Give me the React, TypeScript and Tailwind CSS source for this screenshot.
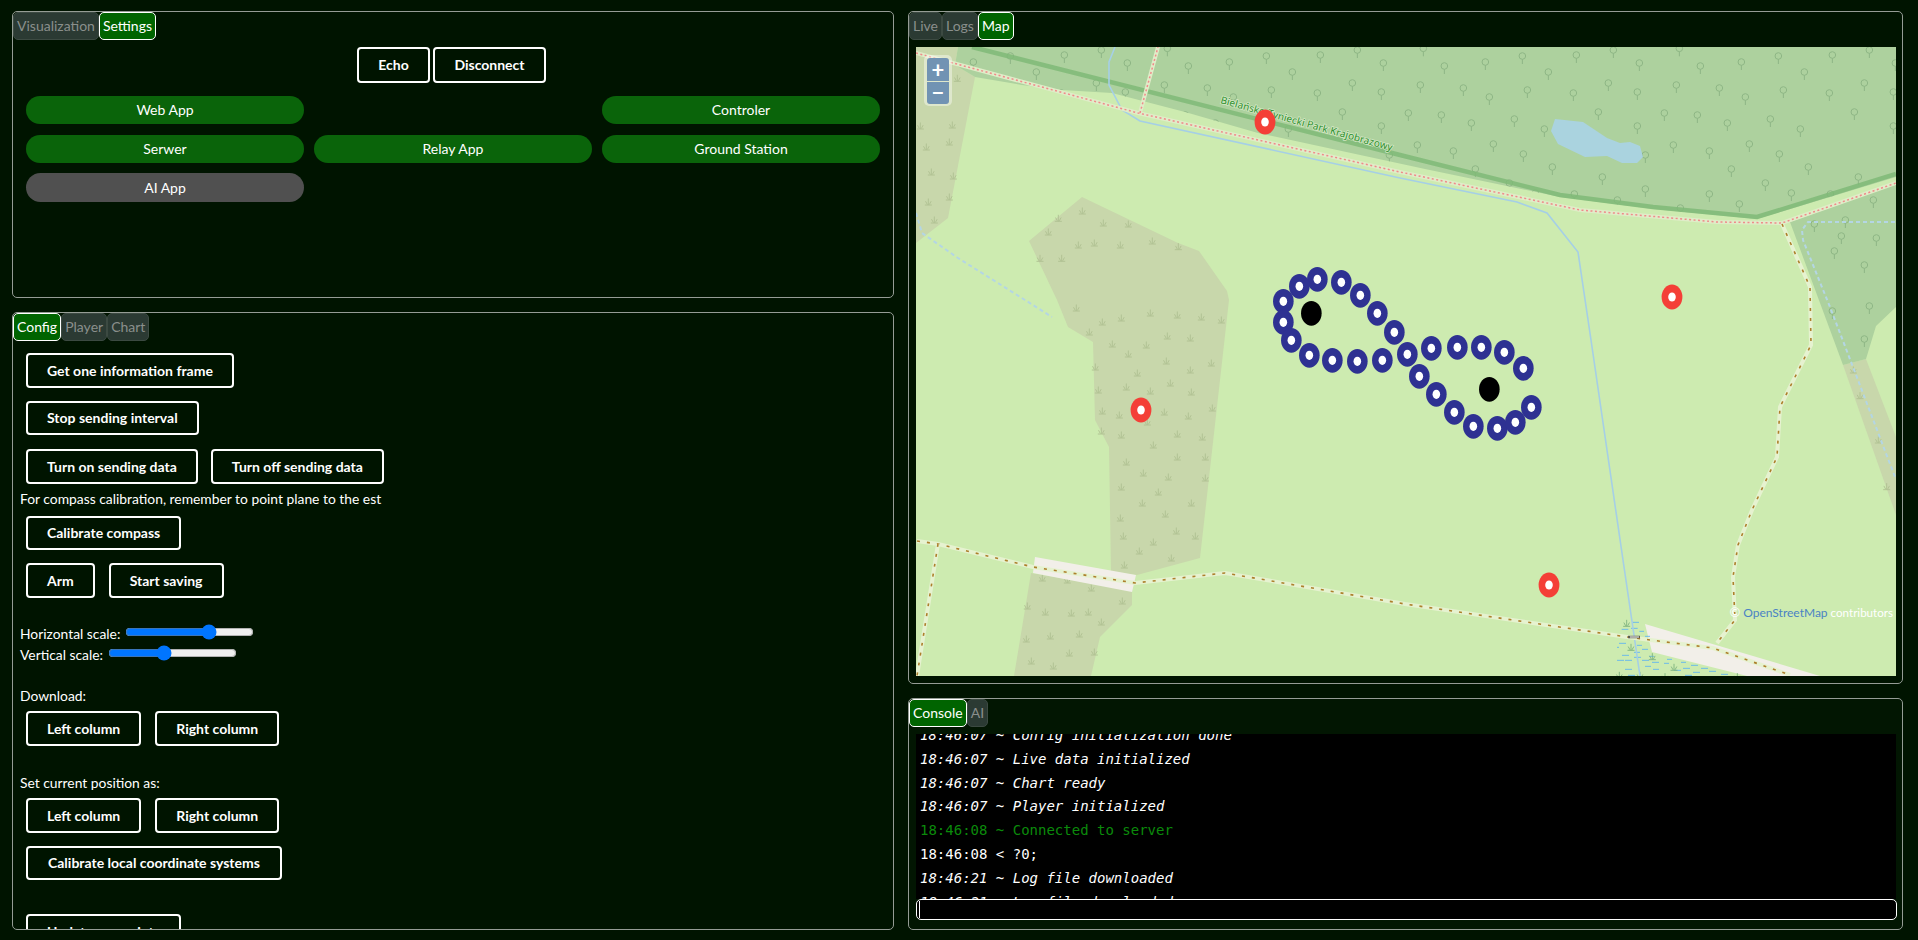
import React from "react";

// coordinates below are page pixels, the map svg's viewBox starts at the map's corner
const forestMain = "958,47 955,65 975,77 1022,85 1062,90 1112,93 1185,112 1258,133 1425,169 1560,197 1653,209 1757,219 1896,177 1896,47";
const forestRight = "1790,222 1896,184 1896,307 1876,326 1866,359 1843,365";
const lake = "1555,119 1583,122 1607,138 1620,143 1630,142 1640,146 1643,157 1637,163 1622,163 1607,156 1585,157 1558,144 1551,131";

const scrubAreas = [
    "916,47 958,47 955,65 975,77 948,218 916,243",
    "1082,197 1178,243 1199,251 1227,291 1229,300 1200,558 1137,575 1111,572 1109,447 1095,420 1093,342 1068,327 1057,300 1029,241",
    "1031,573 1132,590 1132,605 1100,637 1091,676 1014,676",
    "1843,365 1866,359 1896,437 1896,515",
];

const treeTile = [
    [70, 145], [133, 198], [256, 186], [367, 168], [529, 165], [640, 150], [718, 189], [445, 216], [61, 255], [190, 264],
    [382, 270], [268, 291], [520, 279], [625, 249], [712, 276], [25, 339], [124, 345], [214, 369], [343, 357], [433, 387],
    [595, 336], [712, 378], [52, 435], [160, 453], [280, 432], [370, 462], [736, 465], [226, 507], [457, 501], [607, 531],
    [736, 567], [328, 549], [523, 582], [652, 600], [73, 624], [160, 582], [250, 612], [406, 579], [349, 672], [475, 672],
    [568, 660], [661, 714], [535, 753], [625, 795], [556, 708],
];

const grassMid = [
    [514, 24], [592, 66], [649, 54], [736, 39], [817, 45], [889, 51], [949, 60], [553, 96], [622, 132], [724, 135],
    [787, 108], [856, 114], [670, 162], [784, 183], [856, 210], [919, 189], [571, 201], [697, 219], [664, 261], [736, 273],
    [796, 249], [859, 276], [580, 270], [592, 333], [643, 345], [778, 336], [850, 348], [922, 324], [727, 366], [589, 393],
    [649, 405], [817, 402], [892, 411], [745, 435], [664, 486], [817, 471], [901, 471], [715, 519], [790, 531], [901, 534],
    [649, 561], [760, 576], [712, 609], [859, 609], [646, 654], [781, 642], [655, 708], [745, 726], [814, 693], [871, 708],
    [703, 753], [799, 774], [658, 795], [412, 834], [487, 840], [559, 864], [652, 903], [367, 918], [421, 936], [499, 939],
    [550, 936], [589, 966], [364, 1017], [436, 1008], [523, 1002], [493, 1059], [568, 1056], [379, 1083], [445, 1098],
];
const grassTop = [
    [92, 230], [157, 235], [46, 378], [142, 375], [64, 441], [133, 426], [79, 516], [145, 528], [70, 606], [133, 591], [88, 660],
    [532, 633], [460, 655], [595, 669], [670, 672], [430, 696], [520, 735], [568, 729], [646, 735], [742, 723], [820, 740], [405, 775], [470, 775],
];
const grassRight = [[340, 480], [360, 557], [415, 690], [440, 830]];

const trackDots = [
    [232, 88], [178, 109], [130, 154], [130, 217], [154, 271], [208, 316], [277, 331], [352, 334], [427, 331], [502, 313],
    [538, 379], [589, 433], [643, 487], [700, 529], [772, 535], [826, 517], [874, 472], [304, 97], [361, 136], [412, 190],
    [463, 247], [574, 295], [652, 292], [724, 292], [793, 307], [850, 355],
];
const homeDots = [[214, 190], [748, 418]];
const redDots = [[1265, 122], [1672, 297], [1141, 410], [1549, 585]];

const wetDashes = [
    [697, 717, 187], [665, 685, 208], [693, 713, 205], [718, 732, 214], [660, 675, 229], [735, 750, 229], [657, 678, 250], [711, 726, 256],
    [726, 744, 268], [651, 657, 262], [666, 687, 286], [702, 723, 292], [747, 762, 289], [651, 672, 301], [675, 696, 301], [726, 747, 301],
    [756, 777, 307], [792, 807, 310], [843, 858, 307], [675, 696, 328], [735, 753, 319], [759, 777, 328], [801, 816, 298], [873, 894, 316],
    [849, 870, 325], [903, 924, 325], [822, 843, 331], [879, 900, 337], [927, 948, 334], [963, 984, 343], [855, 876, 346], [684, 705, 346], [702, 720, 277],
];
const wetGrass = [[680, 190], [693, 262], [757, 290], [822, 322], [658, 346], [720, 346], [795, 350], [1012, 350]];

function Tree({ x, y }: { x: number; y: number }) {
    return (
        <g fill="none" stroke="#8db584" strokeWidth="1">
            <circle cx={x} cy={y} r="3.3" />
            <path d={`M${x} ${y + 3.3}v4.7`} />
        </g>
    );
}

function Grass({ x, y, color = "#afc091" }: { x: number; y: number; color?: string }) {
    return (
        <path
            d={`M${x} ${y - 3.5}v6.5M${x - 3.5} ${y + 3}h7M${x - 2.8} ${y - 0.8}l1.8 3.3M${x + 2.8} ${y - 0.8}l-1.8 3.3`}
            fill="none"
            stroke={color}
            strokeWidth="0.9"
        />
    );
}

function Dot({ x, y, rx, ry, color, hole }: { x: number; y: number; rx: number; ry: number; color: string; hole?: boolean }) {
    return (
        <g>
            <ellipse cx={x} cy={y} rx={rx} ry={ry} fill={color} />
            {hole && <ellipse cx={x} cy={y} rx="3.8" ry="4.6" fill="#ffffff" />}
        </g>
    );
}

function Track({ points }: { points: string }) {
    return (
        <g fill="none">
            <polyline points={points} stroke="#e6f2d0" strokeWidth="4" />
            <polyline points={points} stroke="#ad7f2b" strokeWidth="1.6" strokeDasharray="3 7" />
        </g>
    );
}

function MapDrawing() {
    return (
        <svg viewBox="916 47 980 629" className="block w-full h-full">
            <defs>
                <pattern id="trees" patternUnits="userSpaceOnUse" x="1400" y="37" width="256" height="256">
                    {treeTile.map(([x, y]) => (
                        <Tree key={`${x}-${y}`} x={x / 3} y={y / 3 - 37} />
                    ))}
                </pattern>
            </defs>
            <rect x="916" y="47" width="980" height="629" fill="#cdebb0" />

            {scrubAreas.map((area) => (
                <polygon key={area} points={area} fill="#c8d7ab" />
            ))}
            {grassMid.map(([x, y]) => (
                <Grass key={`m${x}-${y}`} x={905 + x / 3} y={300 + y / 3} />
            ))}
            {grassTop.map(([x, y]) => (
                <Grass key={`t${x}-${y}`} x={905 + x / 3} y={y / 3} />
            ))}
            {grassRight.map(([x, y]) => (
                <Grass key={`r${x}-${y}`} x={1740 + x / 3} y={210 + y / 3} />
            ))}

            <polygon points={forestMain} fill="#add19e" />
            <polygon points={forestRight} fill="#add19e" />
            <polygon points={forestMain} fill="url(#trees)" />
            <polygon points={forestRight} fill="url(#trees)" />
            <polygon points={lake} fill="#aad3df" />

            <polygon points="1035,557 1136,575 1132,592 1033,573" fill="#f2efe9" />
            <polygon points="1645,624 1820,676 1747,676 1652,652" fill="#f2efe9" />

            {wetDashes.map(([a, b, y]) => (
                <path key={`${a}-${y}`} d={`M${1400 + a / 3} ${560 + y / 3}H${1400 + b / 3}`} stroke="#62b6ee" strokeWidth="0.9" />
            ))}
            {wetGrass.map(([x, y]) => (
                <Grass key={`w${x}-${y}`} x={1400 + x / 3} y={560 + y / 3} color="#7fb37f" />
            ))}

            {/* park border */}
            <polyline points="972,47 1400,155 1560,195 1653,207 1757,217 1896,174" fill="none" stroke="#7fba77" strokeWidth="4.5" opacity="0.85" />

            {/* streams */}
            <polyline points="1115,47 1109,62 1109,85 1122,110 1140,121 1400,178 1517,202 1547,213 1578,252 1591,340 1623,560 1640,676" fill="none" stroke="#a5cfe6" strokeWidth="1.6" />
            <polyline points="916,213 922,233 958,258 1025,300 1052,317" fill="none" stroke="#b4d6e4" strokeWidth="2" strokeDasharray="4 3" />
            <polyline points="1895,222 1808,222 1802,230 1803,240 1830,307 1853,367 1895,477" fill="none" stroke="#b4d6e4" strokeWidth="2" strokeDasharray="4 3" />

            {/* pink road */}
            <g fill="none">
                <polyline points="916,53 1138,113 1400,172 1580,210 1717,222 1782,223 1896,183" stroke="#e0ecc8" strokeWidth="4" />
                <polyline points="1140,113 1158,47" stroke="#e0ecc8" strokeWidth="4" />
                <polyline points="916,53 1138,113 1400,172 1580,210 1717,222 1782,223 1896,183" stroke="#f08a8a" strokeWidth="1.5" strokeDasharray="2 2.5" />
                <polyline points="1140,113 1158,47" stroke="#f08a8a" strokeWidth="1.5" strokeDasharray="2 2.5" />
            </g>

            {/* paths */}
            <Track points="917,541 938,544 1033,567 1135,583 1225,573 1405,604 1627,637 1713,648 1790,675" />
            <Track points="938,544 917,676" />
            <Track points="1782,224 1810,287 1811,345 1780,407 1777,457 1752,510 1738,545 1733,577 1735,620 1717,643" />
            <path d="M1628 637h12" stroke="#5a5a50" strokeWidth="2.5" />
            <path d="M1630 637h9" stroke="#ffffff" strokeWidth="1" />

            <text
                x="1220"
                y="103"
                transform="rotate(15.6 1220 103)"
                textLength="178"
                fontFamily="'Noto Sans', sans-serif"
                fontSize="10"
                fill="#2b8f2b"
                stroke="#d5e8c6"
                strokeWidth="1.5"
                paintOrder="stroke"
            >
                Bielańsko-Tyniecki Park Krajobrazowy
            </text>

            {redDots.map(([x, y]) => (
                <Dot key={`${x}-${y}`} x={x} y={y} rx={10.4} ry={12.4} color="#f43f37" hole />
            ))}
            {trackDots.map(([x, y]) => (
                <Dot key={`${x}-${y}`} x={1240 + x / 3} y={250 + y / 3} rx={10.3} ry={12.4} color="#2e3192" hole />
            ))}
            {homeDots.map(([x, y]) => (
                <Dot key={`${x}-${y}`} x={1240 + x / 3} y={250 + y / 3} rx={10.3} ry={12.4} color="#000000" />
            ))}
        </svg>
    );
}

function Tab({ label, active }: { label: string; active?: boolean }) {
    return (
        <div
            className={
                active
                    ? "h-[28px] px-[3px] pb-px flex items-center rounded-[5px] border border-white bg-[#006400] text-white text-[14px]"
                    : "h-[28px] px-[3px] pb-px flex items-center rounded-[5px] border border-[#3c4a42] bg-[#2b3a33] text-[#8a8f8c] text-[14px]"
            }
        >
            {label}
        </div>
    );
}

function TabBar({ children }: { children: React.ReactNode }) {
    return <div className="flex shrink-0 gap-0">{children}</div>;
}

function Panel({ className, children }: { className: string; children: React.ReactNode }) {
    return <section className={`border border-[#959c95] rounded-[5px] overflow-hidden flex flex-col ${className}`}>{children}</section>;
}

function Btn({ label, className = "" }: { label: string; className?: string }) {
    return (
        <button
            type="button"
            className={`h-[35px] px-[19px] pb-px border-2 border-white rounded-[4px] bg-transparent text-white text-[14px] font-bold whitespace-nowrap ${className}`}
        >
            {label}
        </button>
    );
}

function Pill({ label, off }: { label: string; off?: boolean }) {
    return (
        <div
            className={
                off
                    ? "h-[29px] pb-px rounded-full bg-[#505050] flex items-center justify-center text-white text-[14px]"
                    : "h-[28px] pb-px rounded-full bg-[#0a640a] flex items-center justify-center text-white text-[14px]"
            }
        >
            {label}
        </div>
    );
}

function Scale({ label, value, className }: { label: string; value: number; className: string }) {
    return (
        <div className={`flex items-center h-[20px] text-[13.85px] text-white ${className}`}>
            <span>{label}</span>
            <input
                type="range"
                min={0}
                max={100}
                defaultValue={value}
                className="w-[129px] ml-[5px] mb-[4px] accent-[#0075ff]"
            />
        </div>
    );
}

const logLines = [
    { text: "18:46:07 ~ Config initialization done", kind: "info" },
    { text: "18:46:07 ~ Live data initialized", kind: "info" },
    { text: "18:46:07 ~ Chart ready", kind: "info" },
    { text: "18:46:07 ~ Player initialized", kind: "info" },
    { text: "18:46:08 ~ Connected to server", kind: "ok" },
    { text: "18:46:08 < ?0;", kind: "plain" },
    { text: "18:46:21 ~ Log file downloaded", kind: "info" },
    { text: "18:46:21 ~ Log file downloaded", kind: "info" },
];

export default function App() {
    return (
        <div className="h-screen w-screen overflow-hidden bg-[#001400] pl-3 pt-[11px] pb-[10px] flex gap-[14px] font-['Lato',sans-serif] text-[13.85px] text-white">
            <div className="w-[882px] flex flex-col gap-[14px]">
                <Panel className="h-[287px] shrink-0">
                    <TabBar>
                        <Tab label="Visualization" />
                        <Tab label="Settings" active />
                    </TabBar>
                    <div className="flex justify-center gap-[3px] mt-[7px] pr-[3px]">
                        <Btn label="Echo" className="w-[73px] !h-[36px] !px-0" />
                        <Btn label="Disconnect" className="w-[113px] !h-[36px] !px-0" />
                    </div>
                    <div className="grid grid-cols-3 gap-x-[10px] px-[13px] mt-[13px]">
                        <Pill label="Web App" />
                        <div />
                        <Pill label="Controler" />
                        <div className="col-span-3 h-[11px]" />
                        <Pill label="Serwer" />
                        <Pill label="Relay App" />
                        <Pill label="Ground Station" />
                        <div className="col-span-3 h-[10px]" />
                        <Pill label="AI App" off />
                    </div>
                </Panel>

                <Panel className="flex-1 min-h-0">
                    <TabBar>
                        <Tab label="Config" active />
                        <Tab label="Player" />
                        <Tab label="Chart" />
                    </TabBar>
                    <div className="pl-[7px]">
                        <div className="ml-[6px] mt-[12px]">
                            <Btn label="Get one information frame" />
                        </div>
                        <div className="ml-[6px] mt-[13px]">
                            <Btn label="Stop sending interval" className="!h-[34px]" />
                        </div>
                        <div className="ml-[6px] mt-[14px] flex gap-[13px]">
                            <Btn label="Turn on sending data" />
                            <Btn label="Turn off sending data" />
                        </div>
                        <p className="mt-[5px] h-[20px] leading-[20px]">For compass calibration, remember to point plane to the est</p>
                        <div className="ml-[6px] mt-[7px]">
                            <Btn label="Calibrate compass" className="!h-[34px]" />
                        </div>
                        <div className="ml-[6px] mt-[13px] flex gap-[14px]">
                            <Btn label="Arm" />
                            <Btn label="Start saving" />
                        </div>

                        <Scale label="Horizontal scale:" value={67} className="mt-[26px]" />
                        <Scale label="Vertical scale:" value={42} className="mt-px" />

                        <p className="mt-[21px] h-[20px] leading-[20px]">Download:</p>
                        <div className="ml-[6px] mt-[5px] flex gap-[14px]">
                            <Btn label="Left column" />
                            <Btn label="Right column" />
                        </div>

                        <p className="mt-[27px] h-[20px] leading-[20px]">Set current position as:</p>
                        <div className="ml-[6px] mt-[5px] flex gap-[14px]">
                            <Btn label="Left column" />
                            <Btn label="Right column" />
                        </div>
                        <div className="ml-[6px] mt-[13px]">
                            <Btn label="Calibrate local coordinate systems" className="!px-[20px] !h-[34px]" />
                        </div>
                        <div className="ml-[6px] mt-[34px]">
                            <Btn label="Update waypoints" />
                        </div>
                    </div>
                </Panel>
            </div>

            <div className="w-[995px] flex flex-col gap-[14px]">
                <Panel className="h-[673px] shrink-0">
                    <TabBar>
                        <Tab label="Live" />
                        <Tab label="Logs" />
                        <Tab label="Map" active />
                    </TabBar>
                    <div className="relative flex-1 min-h-0 ml-[7px] mr-[6px] mt-[7px] mb-[7px]">
                        <MapDrawing />
                        <div className="absolute left-2 top-2 w-[28px] h-[51px] p-[3px] rounded-[5px] bg-[#ffffff66]">
                            <div className="h-[23px] rounded-t-[3px] bg-[#7193b3] flex items-center justify-center text-white text-[22px] font-bold leading-none">+</div>
                            <div className="h-[22px] mt-px rounded-b-[3px] bg-[#7193b3] flex items-center justify-center text-white text-[22px] font-bold leading-none">−</div>
                        </div>
                        <div className="absolute right-[3px] bottom-[53px] text-[11.6px] leading-[20px] text-white whitespace-nowrap">
                            <span className="text-[13px]">©</span> <span className="text-[12px] text-[#4a82c4]">OpenStreetMap</span> contributors
                        </div>
                    </div>
                </Panel>

                <Panel className="flex-1 min-h-0 bg-[#021602]">
                    <TabBar>
                        <Tab label="Console" active />
                        <Tab label="AI" />
                    </TabBar>
                    <div className="flex-1 min-h-0 ml-[7px] mr-[6px] mt-[7px] bg-black overflow-hidden font-['DejaVu_Sans_Mono',monospace] text-[14px] leading-[23.8px] pl-[4px]">
                        <div className="-mt-[10px]">
                            {logLines.map((line, i) => (
                                <div
                                    key={i}
                                    className={
                                        line.kind === "ok"
                                            ? "text-[#0b8a0b] whitespace-nowrap"
                                            : line.kind === "info"
                                              ? "italic text-white whitespace-nowrap"
                                              : "text-white whitespace-nowrap"
                                    }
                                >
                                    {line.text}
                                </div>
                            ))}
                        </div>
                    </div>
                    <div className="relative ml-[7px] mr-[5px] mb-[9px] h-[21px] shrink-0">
                        <input type="text" className="block w-full h-full bg-black border border-white rounded-[5px] outline-none" />
                        <div className="absolute left-[3px] top-[2px] bottom-[2px] w-px bg-white" />
                    </div>
                </Panel>
            </div>
        </div>
    );
}
